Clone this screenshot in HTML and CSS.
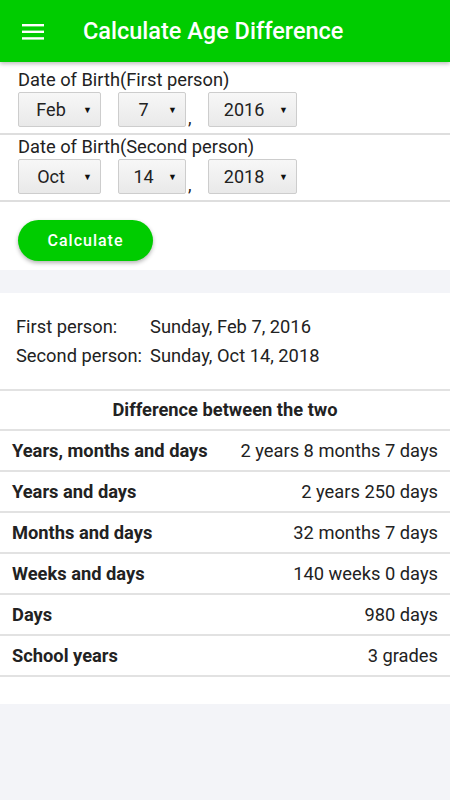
FILE: index.html
```html
<!DOCTYPE html>
<html>
<head>
  <title>Calculate Age Difference</title>
  <link rel="stylesheet" href="styles.css">
</head>
<body>

  <div class="topbar">
    <svg class="menu-icon" width="22" height="18" viewBox="0 0 22 18">
      <rect x="0" y="2" width="22" height="2.4" fill="#fff"/>
      <rect x="0" y="8.6" width="22" height="2.4" fill="#fff"/>
      <rect x="0" y="15.2" width="22" height="2.4" fill="#fff"/>
    </svg>
    <h1>Calculate Age Difference</h1>
  </div>

  <div class="form-card">
    <div class="dob-group first">
      <div class="dob-label">Date of Birth(First person)</div>
      <div class="dob-row">
        <div class="spinner month"><span class="val">Feb</span><span class="caret">▼</span></div>
        <div class="spinner day"><span class="val">7</span><span class="caret">▼</span></div>
        <span class="comma">,</span>
        <div class="spinner year"><span class="val">2016</span><span class="caret">▼</span></div>
      </div>
    </div>

    <div class="dob-group">
      <div class="dob-label">Date of Birth(Second person)</div>
      <div class="dob-row">
        <div class="spinner month"><span class="val">Oct</span><span class="caret">▼</span></div>
        <div class="spinner day"><span class="val">14</span><span class="caret">▼</span></div>
        <span class="comma">,</span>
        <div class="spinner year"><span class="val">2018</span><span class="caret">▼</span></div>
      </div>
    </div>

    <div class="btn-area">
      <button class="calc-btn">Calculate</button>
    </div>
  </div>

  <div class="result-card">
    <div class="dates">
      <span>First person:</span><span>Sunday, Feb 7, 2016</span>
      <span>Second person:</span><span>Sunday, Oct 14, 2018</span>
    </div>

    <div class="diff-title">Difference between the two</div>
    <div class="diff-row"><span class="name">Years, months and days</span><span>2 years 8 months 7 days</span></div>
    <div class="diff-row"><span class="name">Years and days</span><span>2 years 250 days</span></div>
    <div class="diff-row"><span class="name">Months and days</span><span>32 months 7 days</span></div>
    <div class="diff-row"><span class="name">Weeks and days</span><span>140 weeks 0 days</span></div>
    <div class="diff-row"><span class="name">Days</span><span>980 days</span></div>
    <div class="diff-row"><span class="name">School years</span><span>3 grades</span></div>
  </div>

</body>
</html>
```

FILE: styles.css
```css
body {
  font-family: Roboto, "Noto Sans", sans-serif;
  background-color: #f3f4f8;
  color: #222;
  margin: 0;
  padding: 0;
}

.topbar {
  background-color: #00cc00;
  height: 62px;
  display: flex;
  align-items: center;
  box-shadow: 0 2px 4px rgba(0,0,0,0.25);
  position: relative;
}

.menu-icon {
  margin-left: 22px;
  margin-right: 39px;
}

.topbar h1 {
  margin: 0;
  color: white;
  font-size: 23.5px;
  font-weight: 500;
}

.form-card {
  background: white;
  padding-bottom: 9px;
}

.dob-group {
  padding: 2px 18px 6px;
  border-bottom: 2px solid #dedede;
}

.dob-group.first {
  padding-top: 8px;
}

.dob-label {
  font-size: 18.3px;
  line-height: 20px;
  margin-bottom: 2px;
  color: #222;
}

.dob-row {
  display: flex;
  align-items: flex-end;
}

.spinner {
  height: 33px;
  border: 1px solid #cdcdcd;
  border-radius: 2px;
  background: linear-gradient(#f7f7f7, #e9e9e9);
  display: flex;
  align-items: center;
  font-size: 18px;
  color: #222;
  box-sizing: content-box;
}

.spinner .val {
  flex: 1;
  text-align: center;
}

.spinner .caret {
  font-size: 9px;
  margin-right: 8px;
  color: #111;
}

.month {
  width: 81px;
  margin-right: 17px;
}

.day {
  width: 66px;
}

.comma {
  font-size: 18px;
  width: 22px;
  padding-left: 2px;
  line-height: 18px;
  box-sizing: border-box;
}

.year {
  width: 87px;
}

.btn-area {
  padding: 18px 18px 0;
}

.calc-btn {
  background-color: #00cc00;
  color: white;
  border: none;
  border-radius: 21px;
  width: 135px;
  height: 41px;
  font-family: Roboto, sans-serif;
  font-size: 16px;
  font-weight: 500;
  letter-spacing: 1px;
  box-shadow: 0 2px 4px rgba(0,0,0,0.3);
  cursor: pointer;
}

.result-card {
  background: white;
  margin-top: 23px;
  padding-bottom: 27px;
}

.dates {
  display: grid;
  grid-template-columns: auto 1fr;
  column-gap: 8px;
  padding: 19px 16px;
  font-size: 18.3px;
  line-height: 29px;
  border-bottom: 2px solid #e2e2e2;
}

.diff-title {
  text-align: center;
  font-weight: bold;
  font-size: 18.3px;
  height: 38px;
  line-height: 38px;
  border-bottom: 2px solid #e2e2e2;
}

.diff-row {
  display: flex;
  justify-content: space-between;
  align-items: center;
  height: 39px;
  padding: 0 12px;
  font-size: 18.3px;
  border-bottom: 2px solid #e2e2e2;
}

.diff-row .name {
  font-weight: bold;
}
```
